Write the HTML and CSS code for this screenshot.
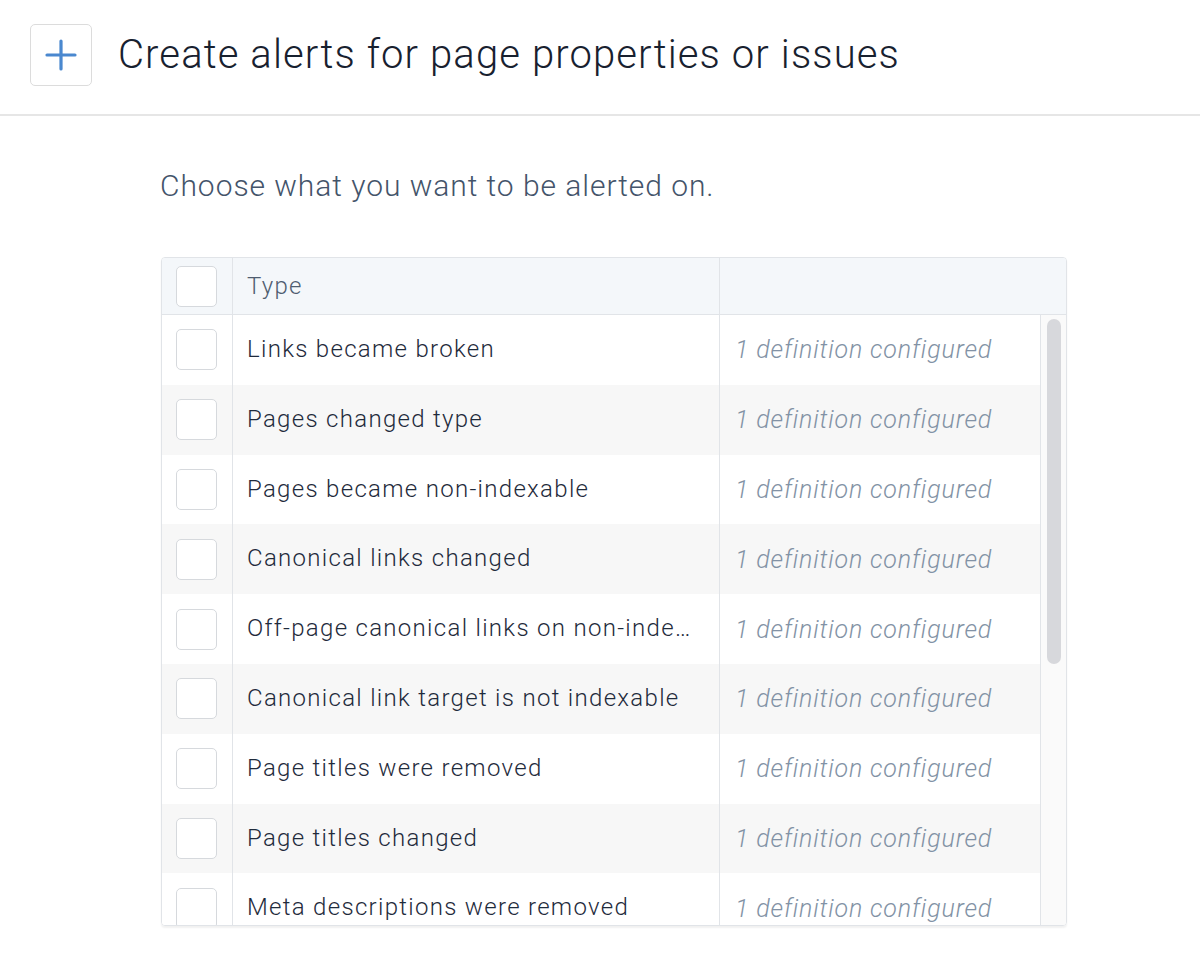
FILE: index.html
```html
<!DOCTYPE html>
<html>
<head>
<meta charset="utf-8">
<link rel="stylesheet" href="styles.css">
</head>
<body>
<header class="topbar">
  <button class="add-btn" aria-label="Add">
    <svg width="34" height="34" viewBox="0 0 34 34"><path d="M17 3v28M3 17h28" stroke="#4a88cf" stroke-width="3.2" stroke-linecap="round" fill="none"/></svg>
  </button>
  <h1 class="title">Create alerts for page properties or issues</h1>
</header>
<main class="content">
  <p class="lead">Choose what you want to be alerted on.</p>
  <div class="table">
    <div class="thead">
      <div class="cell check"><span class="box"></span></div>
      <div class="cell type">Type</div>
      <div class="cell def"></div>
    </div>
    <div class="tbody-wrap">
      <div class="tbody">
        <div class="row"><div class="cell check"><span class="box"></span></div><div class="cell type">Links became broken</div><div class="cell def">1 definition configured</div></div>
        <div class="row alt"><div class="cell check"><span class="box"></span></div><div class="cell type">Pages changed type</div><div class="cell def">1 definition configured</div></div>
        <div class="row"><div class="cell check"><span class="box"></span></div><div class="cell type">Pages became non-indexable</div><div class="cell def">1 definition configured</div></div>
        <div class="row alt"><div class="cell check"><span class="box"></span></div><div class="cell type">Canonical links changed</div><div class="cell def">1 definition configured</div></div>
        <div class="row"><div class="cell check"><span class="box"></span></div><div class="cell type">Off-page canonical links on non-indexable pages</div><div class="cell def">1 definition configured</div></div>
        <div class="row alt"><div class="cell check"><span class="box"></span></div><div class="cell type">Canonical link target is not indexable</div><div class="cell def">1 definition configured</div></div>
        <div class="row"><div class="cell check"><span class="box"></span></div><div class="cell type">Page titles were removed</div><div class="cell def">1 definition configured</div></div>
        <div class="row alt"><div class="cell check"><span class="box"></span></div><div class="cell type">Page titles changed</div><div class="cell def">1 definition configured</div></div>
        <div class="row"><div class="cell check"><span class="box"></span></div><div class="cell type">Meta descriptions were removed</div><div class="cell def">1 definition configured</div></div>
      </div>
      <div class="scrolltrack"><div class="thumb"></div></div>
    </div>
  </div>
</main>
</body>
</html>
```

FILE: styles.css
```css
* { box-sizing: border-box; }
html, body { margin: 0; padding: 0; background: #fff; }
body {
  font-family: Roboto, "Noto Sans", "Liberation Sans", sans-serif;
  color: #1f2a37;
  width: 1200px;
  height: 963px;
  overflow: hidden;
}
.topbar {
  display: flex;
  align-items: center;
  height: 116px;
  padding: 0 0 5px 30px;
  border-bottom: 2px solid #e6e6e6;
}
.add-btn {
  width: 62px;
  height: 62px;
  border: 1px solid #dcdcdc;
  border-radius: 5px;
  background: #fff;
  display: flex;
  align-items: center;
  justify-content: center;
  padding: 0;
  margin: 0 26px 0 0;
}
.title {
  margin: 0;
  font-weight: 300;
  font-size: 40px;
  letter-spacing: 1.12px;
  color: #18212f;
}
.content {
  padding: 0 0 0 160px;
}
.lead {
  margin: 52px 0 0 0;
  font-size: 30px;
  font-weight: 300;
  letter-spacing: 0.95px;
  color: #44546a;
  line-height: 36px;
}
.table {
  margin: 53px 0 0 1px;
  width: 906px;
  border: 1px solid #e1e4e8;
  border-radius: 4px;
  overflow: hidden;
  box-shadow: 0 2px 2px rgba(0,0,0,0.06);
}
.thead {
  display: flex;
  height: 57px;
  background: #f4f7fa;
  border-bottom: 1px solid #e1e4e8;
}
.cell {
  display: flex;
  align-items: center;
  white-space: nowrap;
  overflow: hidden;
}
.cell.check {
  width: 71px;
  flex: none;
  justify-content: center;
  border-right: 1px solid #e1e4e8;
  padding-right: 1px;
}
.cell.type {
  width: 487px;
  flex: none;
  padding: 0 22px 0 14px;
  border-right: 1px solid #e1e4e8;
  font-size: 24px;
  font-weight: 300;
  letter-spacing: 1.3px;
  color: #1f2b3c;
  text-overflow: ellipsis;
  display: block;
  line-height: 69.8px;
}
.thead .cell.type {
  color: #4f5d70;
  line-height: 56px;
}
.cell.def {
  flex: 1;
  padding: 0 15px;
  font-size: 25px;
  font-style: italic;
  font-weight: 300;
  letter-spacing: 0.85px;
  color: #8292a5;
}
.box {
  width: 41px;
  height: 41px;
  border: 1px solid #d6d9dd;
  border-radius: 5px;
  background: #fff;
  display: block;
}
.tbody-wrap {
  display: flex;
  height: 610px;
}
.tbody {
  width: 879px;
  overflow: hidden;
  border-right: 1px solid #e1e4e8;
}
.row {
  display: flex;
  height: 69.8px;
  background: #fff;
}
.row.alt { background: #f7f7f7; }
.scrolltrack {
  flex: 1;
  background: #fafafa;
  padding: 4px 5px 0 6px;
}
.thumb {
  width: 14px;
  height: 345px;
  background: #d7d8dc;
  border-radius: 7px;
}
```
